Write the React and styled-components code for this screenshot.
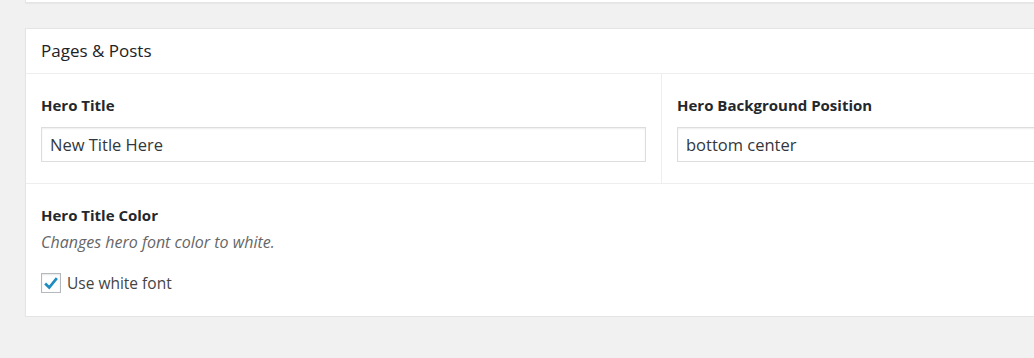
import React from 'react';
import styled, { createGlobalStyle } from 'styled-components';

const GlobalStyle = createGlobalStyle`
  html, body {
    margin: 0;
    padding: 0;
    background: #f1f1f1;
    overflow: hidden;
  }
  body {
    font-family: "Open Sans", "Noto Sans", sans-serif;
    color: #23282d;
  }
`;

const Page = styled.div`
  padding-left: 25px;
  width: 1100px;
`;

const TopCard = styled.div`
  height: 2px;
  background: #fff;
  border: 1px solid #e5e5e5;
  border-top: none;
  box-shadow: 0 1px 1px rgba(0, 0, 0, 0.04);
  margin-bottom: 25px;
`;

const Card = styled.div`
  background: #fff;
  border: 1px solid #e5e5e5;
  box-shadow: 0 1px 1px rgba(0, 0, 0, 0.04);
`;

const CardHeader = styled.h2`
  margin: 0;
  height: 45px;
  box-sizing: border-box;
  padding: 0 15px 1px;
  display: flex;
  align-items: center;
  font-size: 17px;
  font-weight: 400;
  color: #1d2226;
  border-bottom: 1px solid #eee;
`;

const Row = styled.div`
  display: flex;
  border-bottom: ${(p) => (p.$last ? 'none' : '1px solid #eee')};
`;

const Field = styled.div`
  box-sizing: border-box;
  width: ${(p) => p.$width || 'auto'};
  flex: ${(p) => (p.$width ? 'none' : '1')};
  padding: ${(p) => p.$pad || '21px 15px 21px'};
  border-left: ${(p) => (p.$divider ? '1px solid #eee' : 'none')};
`;

const Label = styled.label`
  display: block;
  font-size: 15px;
  font-weight: 700;
  line-height: 20px;
  color: #23282d;
  margin-bottom: 12px;
`;

const Description = styled.p`
  margin: -6px 0 20px;
  font-size: 16px;
  font-style: italic;
  line-height: 22px;
  color: #666;
`;

const TextInput = styled.input`
  display: block;
  box-sizing: border-box;
  width: 100%;
  height: 35px;
  padding: 0 8px;
  border: 1px solid #ddd;
  border-radius: 0;
  box-shadow: inset 0 1px 2px rgba(0, 0, 0, 0.07);
  font-family: "Open Sans", "Noto Sans", sans-serif;
  font-size: 16.5px;
  color: #32373c;
  background: #fff;
  outline: none;
`;

const CheckRow = styled.label`
  display: flex;
  align-items: center;
  gap: 6px;
  font-size: 15.5px;
  line-height: 20px;
  color: #444;
`;

const Box = styled.span`
  box-sizing: border-box;
  width: 20px;
  height: 20px;
  border: 1px solid #b4b9be;
  box-shadow: inset 0 1px 2px rgba(0, 0, 0, 0.1);
  background: #fff;
  display: flex;
  align-items: center;
  justify-content: center;
`;

const Check = () => (
  <svg width="18" height="18" viewBox="0 0 20 20">
    <path d="M3.5 10.5 L8 15 L16.5 4.5" fill="none" stroke="#1e8cbe" strokeWidth="3" strokeLinejoin="miter" />
  </svg>
);

export default function App() {
  return (
    <>
      <GlobalStyle />
      <Page>
        <TopCard />
        <Card>
          <CardHeader>Pages &amp; Posts</CardHeader>
          <Row>
            <Field $width="635px">
              <Label>Hero Title</Label>
              <TextInput defaultValue="New Title Here" />
            </Field>
            <Field $divider>
              <Label>Hero Background Position</Label>
              <TextInput defaultValue="bottom center" />
            </Field>
          </Row>
          <Row $last>
            <Field $pad="21px 15px 23px">
              <Label>Hero Title Color</Label>
              <Description>Changes hero font color to white.</Description>
              <CheckRow>
                <Box>
                  <Check />
                </Box>
                Use white font
              </CheckRow>
            </Field>
          </Row>
        </Card>
      </Page>
    </>
  );
}
